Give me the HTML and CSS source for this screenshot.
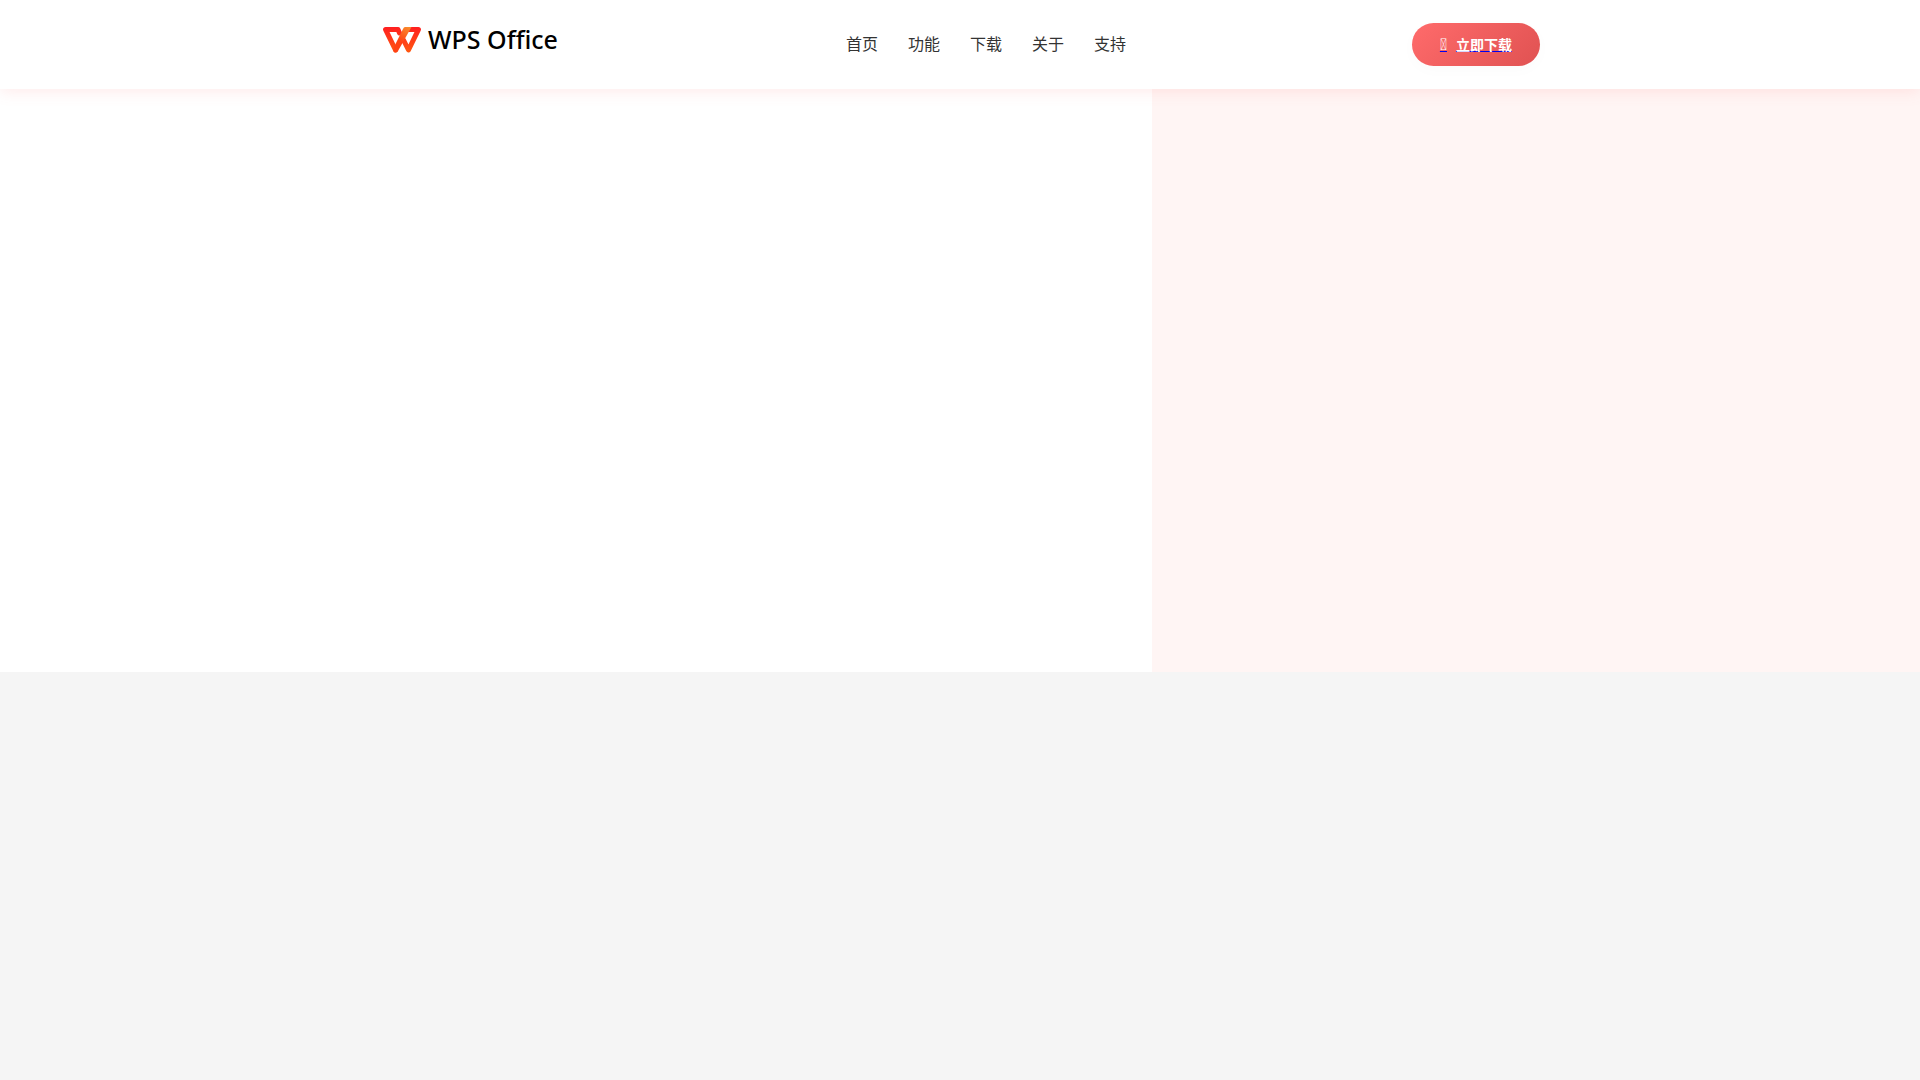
FILE: index.html
```html
<!DOCTYPE html>
<html lang="zh-CN">
<head>
	<meta charset="UTF-8">
	<meta name="viewport" content="width=device-width, initial-scale=1.0">
	<title>WPS Office</title>
	<link rel="stylesheet" href="styles.css">
</head>
<body>

	<!-- 顶部导航 -->
	<header class="header">
		<div class="container">
			<a class="logo" href="#">
				<svg class="logo-mark" viewBox="0 0 38 26" aria-hidden="true">
					<defs>
						<linearGradient id="red" gradientUnits="userSpaceOnUse" x1="0" y1="0" x2="0" y2="26">
							<stop offset="0" stop-color="#ff1f20"/>
							<stop offset="1" stop-color="#ff5a10"/>
						</linearGradient>
						<linearGradient id="fold" gradientUnits="userSpaceOnUse" x1="25" y1="0" x2="17" y2="14">
							<stop offset="0" stop-color="#f98a2c"/>
							<stop offset="1" stop-color="#ff4214"/>
						</linearGradient>
					</defs>
					<g fill="none" stroke="url(#red)" stroke-width="5" stroke-linejoin="round" stroke-linecap="round">
						<path d="M20.500 13L25.500 23L35.400 2.600H24"/>
						<path d="M12.500 23L2.600 2.600H15L16.500 6"/>
					</g>
					<path fill="url(#fold)" d="M22 0H28.500L15 24Q13.500 26.500 11 25Q9.500 23.500 11 20L20 2Q20.800 0 22 0Z"/>
				</svg>
				<span class="logo-text">WPS Office</span>
			</a>

			<nav class="nav">
				<a href="#">首页</a>
				<a href="#">功能</a>
				<a href="#">下载</a>
				<a href="#">关于</a>
				<a href="#">支持</a>
			</nav>

			<a class="download" href="#download">
				<div class="btn"><i class="icon">&#xf019;</i><span>立即下载</span></div>
			</a>
		</div>
	</header>

	<!-- 首屏 -->
	<main class="hero">
		<div class="hero-side"></div>
	</main>

</body>
</html>
```
FILE: styles.css
```css
/*去除默认样式*/
*{
	margin: 0;
	padding: 0;
	box-sizing: border-box;
}

body{
	font-family: Roboto, "Noto Sans CJK SC", sans-serif;
	color: #333;
	background-color: #f5f5f5;
}

/*顶部导航*/
.header{
	position: relative;
	z-index: 1;
	background-color: #fff;
	box-shadow: 0 2px 15px rgba(255, 107, 107, 0.15);
}

.container{
	display: flex;
	justify-content: space-between;
	align-items: center;
	max-width: 1200px;
	min-height: 89px;
	margin: 0 auto;
	padding: 0 20px;
}

/*logo*/
.logo{
	display: flex;
	align-items: center;
	gap: 7px;
	width: 180px;
	padding: 0 0 10px 3px;
	color: #000;
	text-decoration: none;
}

.logo-mark{
	width: 38px;
	height: 26px;
}

.logo-text{
	padding-bottom: 2px;
	font-family: "Noto Sans", sans-serif;
	font-size: 25px;
	font-weight: 500;
	line-height: 30px;
	white-space: nowrap;
}

/*导航链接*/
.nav{
	display: flex;
	gap: 30px;
}

.nav a{
	color: #333;
	font-size: 16px;
	line-height: 24px;
	text-decoration: none;
}

/*下载按钮*/
.download{
	color: #0000ee;
	text-decoration-skip-ink: none;
}

.btn{
	display: flex;
	align-items: center;
	height: 43px;
	padding: 0 28px;
	border-radius: 50px;
	color: #fff;
	font-size: 14px;
	font-weight: bold;
	line-height: 22px;
	background: linear-gradient(135deg, #ff6b6b, #e05252);
	box-shadow: 0 4px 15px rgba(0, 0, 0, 0.02);
}

.icon{
	margin-right: 9px;
	font-size: 16px;
	font-style: normal;
	font-weight: normal;
}

/*首屏*/
.hero{
	display: flex;
	justify-content: flex-end;
	height: 54vh;
	background-color: #fff;
}

.hero-side{
	width: 40%;
	background-color: #fff5f4;
}
```
